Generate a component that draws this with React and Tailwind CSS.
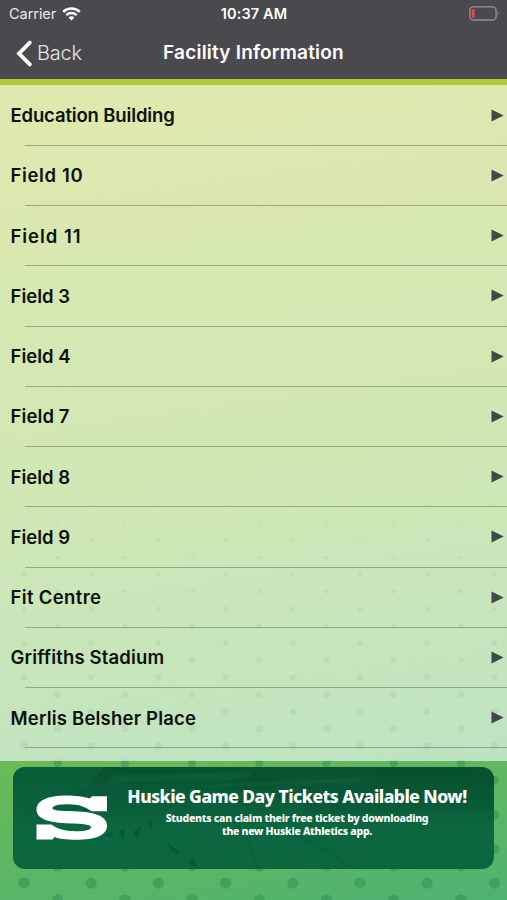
import React from "react";

const ROWS = [
  ["Education Building", "tracking-[-0.15px]"],
  ["Field 10", "tracking-[0.65px]"],
  ["Field 11", "tracking-[0.95px]"],
  ["Field 3", "tracking-[0px]"],
  ["Field 4", "tracking-[0px]"],
  ["Field 7", "tracking-[0.1px]"],
  ["Field 8", "tracking-[0px]"],
  ["Field 9", "tracking-[0px]"],
  ["Fit Centre", "tracking-[0.35px]"],
  ["Griffiths Stadium", "tracking-[0.15px]"],
  ["Merlis Belsher Place", "tracking-[0.2px]"],
];

// Staggered halftone dots that grow toward the bottom of the screen.
function Dots({ top, bottom, fill, opacity }) {
  const dots = [];
  for (let k = 0; k < 28; k++) {
    const y = 900.3 - k * 17.15;
    const r = Math.max(0.5, 5.8 - (900 - y) * 0.0122);
    const start = k % 2 === 0 ? -9.5 : 24;
    for (let x = start; x < 515; x += 67.2) {
      dots.push(<circle key={`${k}-${x}`} cx={x} cy={y} r={r} />);
    }
  }
  return (
    <svg
      className="pointer-events-none absolute inset-0 h-full w-full"
      viewBox={`0 ${top} 507 ${bottom - top}`}
      preserveAspectRatio="none"
      fill={fill}
      opacity={opacity}
    >
      {dots}
    </svg>
  );
}

function StatusBar() {
  return (
    <div className="grid h-[27px] grid-cols-3 items-center pl-[8px] pr-[7px] text-[14.5px] text-[#e9e9ea]">
      <div className="flex items-center gap-[6px] pl-px">
        <span className="tracking-[-0.05px]">Carrier</span>
        <svg width="19" height="14" viewBox="0 0 19 14" fill="none" stroke="#fff" strokeWidth="2.6">
          <path d="M1.2 4.9C5.8 .4 13.2 .4 17.8 4.9" />
          <path d="M4.3 8.1C7.2 5.3 11.8 5.3 14.7 8.1" />
          <path d="M6.6 10.4C8.2 8.9 10.8 8.9 12.4 10.4L9.5 13.5Z" fill="#fff" stroke="none" />
        </svg>
      </div>
      <div className="text-center font-semibold text-white">
        <span className="tracking-[0.1px]">10:37 AM</span>
      </div>
      <svg className="justify-self-end" width="31" height="15" viewBox="0 0 31 15">
        <rect x=".8" y=".8" width="26.3" height="13.2" rx="3.6" fill="none" stroke="#929195" strokeWidth="1.3" />
        <path d="M28.6 5.1Q30.8 7.4 28.6 9.7Z" fill="#929195" />
        <path d="M5.5 3H4.2Q2.6 3 2.6 4.8V10Q2.6 11.8 4.2 11.8H5.5Z" fill="#f04440" />
      </svg>
    </div>
  );
}

function NavBar() {
  return (
    <div className="grid h-[52px] grid-cols-[100px_1fr_100px] items-center">
      <div className="flex items-center gap-[4px] pl-4">
        <svg width="17" height="27" viewBox="0 0 17 27" fill="none" stroke="#fff" strokeWidth="3.8" strokeLinecap="round">
          <path d="M13.8 2.6L3 13.5L13.8 24.4" strokeLinejoin="miter" />
        </svg>
        <span className="text-[20px] font-light tracking-[-0.2px] text-[#e4e4e5]">Back</span>
      </div>
      <h1 className="whitespace-nowrap pt-px text-center text-[19px] font-semibold tracking-[0.2px] text-white">Facility Information</h1>
    </div>
  );
}

function Row({ label, tracking }) {
  return (
    <li className="flex h-[60.25px] flex-col">
      <div className="flex flex-1 items-center justify-between pl-[10.5px] pr-[3.5px]">
        <span className={`whitespace-nowrap text-[18.5px] font-semibold leading-6 text-[#0b1209] ${tracking}`}>{label}</span>
        <svg width="13" height="13" viewBox="0 0 13 13">
          <path d="M.5 .5V12.5L12.7 6.5Z" fill="#414946" />
        </svg>
      </div>
      <div className="ml-[25px] h-px bg-[#223b20]/35" />
    </li>
  );
}

function Banner() {
  return (
    <div className="relative flex h-[102px] overflow-hidden rounded-[12px] bg-linear-to-b from-[#07512f] from-0% via-[#0a5e3a] via-35% to-[#0c6740] to-60%">
      <svg className="absolute inset-0" width="482" height="102" viewBox="0 0 482 102" fill="none">
        <path d="M0 0H90L75 22L40 28L0 48Z" fill="#0c6840" opacity=".45" />
        <path d="M100 8L240 5L235 12L95 16ZM200 17L350 11L345 15L190 21Z" fill="#1b7950" opacity=".2" />
        <path d="M232 5L214 24L285 19L292 47L482 43V9L440 2H365V18L300 20Z" fill="#044a2b" opacity=".2" />
        <path d="M92 68L100 64L98 71ZM105 65L112 61L111 72ZM120 65L128 59L125 74ZM135 56L140 52L138 62ZM154 76L164 82L167 88L158 84ZM176 97L180 91L184 101Z" fill="#05472c" opacity=".5" />
        <path d="M222 55L237 80L246 102M285 70L315 84L340 102" stroke="#064b2f" strokeWidth="3" opacity=".15" />
      </svg>
      <svg className="relative ml-[23px] mt-7 shrink-0" width="72" height="46" viewBox="0 0 72 46">
        <path
          fill="#fff"
          fillRule="evenodd"
          d="M71 1.2V16.2H55.5C50 12 43 9.2 32.5 9.2C22 9.2 16.5 10.7 16.5 13.2C16.5 15.4 23 15.8 38 16.2C60 16.9 71 21.5 71 30.7C71 40.5 59 44.7 40 44.7C30 44.7 23 43.8 18.5 42L16.5 44.4H.5V29.5H15.5C21 34 29 36.2 39.5 36.2C49 36.2 55 34.8 55 32.2C55 29.4 47 28.7 34 28.4C12 27.8 .5 23.5 .5 14.7C.5 5.5 12 .5 30 .5C40 .5 48 1.5 53.5 3.6L56 1.2Z"
        />
      </svg>
      <div className="relative ml-[19px] mt-[18px] flex w-[340px] flex-col items-center whitespace-nowrap font-['Noto_Sans','Open_Sans',sans-serif] font-extrabold text-white">
        <div className="text-[17.5px] leading-[23px] tracking-[-0.54px]">Huskie Game Day Tickets Available Now!</div>
        <div className="mt-[4px] text-[10.5px] leading-[13.3px] tracking-[-0.24px]">Students can claim their free ticket by downloading</div>
        <div className="text-[10.5px] leading-[13.3px] tracking-[-0.28px]">the new Huskie Athletics app.</div>
      </div>
    </div>
  );
}

export default function App() {
  return (
    <main className="flex h-[900px] w-[507px] flex-col overflow-hidden font-['Inter','Liberation_Sans',sans-serif]">
      <header className="h-[85px] shrink-0 border-b-[6px] border-[#adc936] bg-[#4a494d]">
        <StatusBar />
        <NavBar />
      </header>
      <section className="relative h-[676px] shrink-0 overflow-hidden bg-linear-[172deg] from-[#dfe9ae] from-0% via-[#cfe7b5] via-60% to-[#bee3c2] to-100%">
        <Dots top={85} bottom={761} fill="#397b58" opacity={0.08} />
        <ul className="relative pt-[0.6px]">
          {ROWS.map(([label, tracking]) => (
            <Row key={label} label={label} tracking={tracking} />
          ))}
        </ul>
      </section>
      <footer className="relative flex-1 bg-linear-[172deg] from-[#6abb57] to-[#50b270] px-[13px] pt-[6px]">
        <Dots top={761} bottom={900} fill="#2d9150" opacity={0.5} />
        <Banner />
      </footer>
    </main>
  );
}
